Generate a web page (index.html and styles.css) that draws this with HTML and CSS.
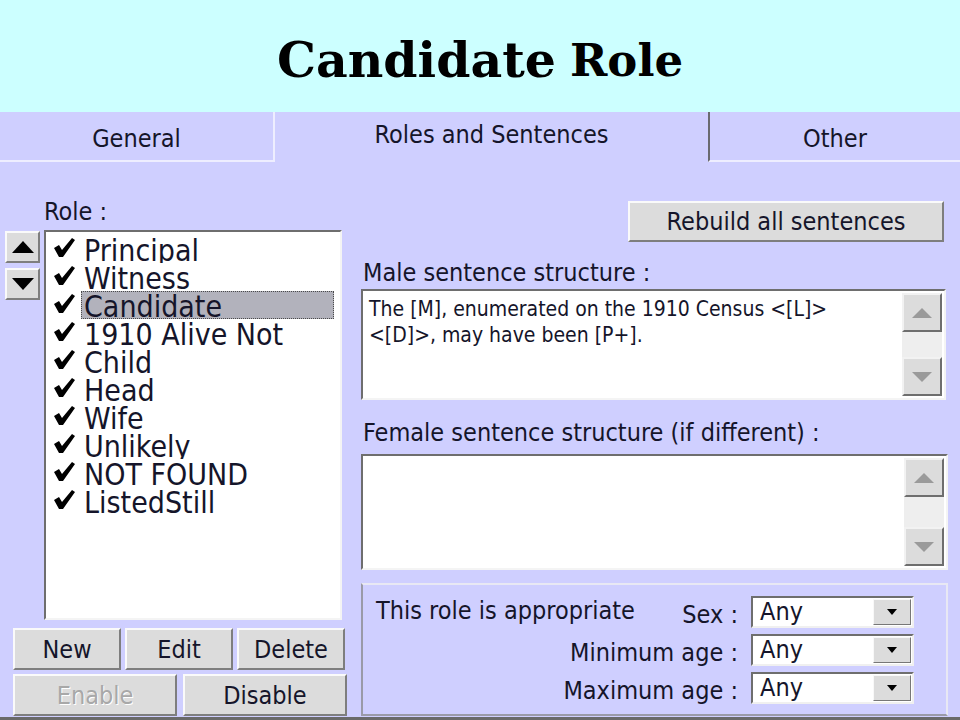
FILE: index.html
```html
<!DOCTYPE html>
<html lang="en">
<head>
  <meta charset="UTF-8">
  <title>Candidate Role</title>
  <link rel="stylesheet" href="styles.css">
</head>
<body>
  <header class="slide-title"><span class="t-big">Candidate</span> <span class="t-small">Role</span></header>

  <div class="dialog">
    <!-- tab strip -->
    <div class="tabs">
      <div class="tab tab-general">General</div>
      <div class="tab tab-active">Roles and Sentences</div>
      <div class="tab tab-other">Other</div>
    </div>

    <div class="page">
      <!-- left: role list -->
      <div class="col-left">
        <div class="label role-label">Role :</div>
        <div class="role-row">
          <div class="movers">
            <div class="btn mover"><svg width="22" height="12" viewBox="0 0 22 12"><polygon points="11,0 22,12 0,12" fill="#000"/></svg></div>
            <div class="btn mover"><svg width="22" height="12" viewBox="0 0 22 12"><polygon points="0,0 22,0 11,12" fill="#000"/></svg></div>
          </div>
          <div class="listbox">
            <div class="item"><svg class="chk" width="22" height="20" viewBox="0 0 22 20"><polygon points="0,10 5,7 8,12 18,0 21,2 9,19 5,19"/></svg><span class="txt">Principal</span></div>
            <div class="item"><svg class="chk" width="22" height="20" viewBox="0 0 22 20"><polygon points="0,10 5,7 8,12 18,0 21,2 9,19 5,19"/></svg><span class="txt">Witness</span></div>
            <div class="item"><svg class="chk" width="22" height="20" viewBox="0 0 22 20"><polygon points="0,10 5,7 8,12 18,0 21,2 9,19 5,19"/></svg><span class="txt sel">Candidate</span></div>
            <div class="item"><svg class="chk" width="22" height="20" viewBox="0 0 22 20"><polygon points="0,10 5,7 8,12 18,0 21,2 9,19 5,19"/></svg><span class="txt">1910 Alive Not</span></div>
            <div class="item"><svg class="chk" width="22" height="20" viewBox="0 0 22 20"><polygon points="0,10 5,7 8,12 18,0 21,2 9,19 5,19"/></svg><span class="txt">Child</span></div>
            <div class="item"><svg class="chk" width="22" height="20" viewBox="0 0 22 20"><polygon points="0,10 5,7 8,12 18,0 21,2 9,19 5,19"/></svg><span class="txt">Head</span></div>
            <div class="item"><svg class="chk" width="22" height="20" viewBox="0 0 22 20"><polygon points="0,10 5,7 8,12 18,0 21,2 9,19 5,19"/></svg><span class="txt">Wife</span></div>
            <div class="item"><svg class="chk" width="22" height="20" viewBox="0 0 22 20"><polygon points="0,10 5,7 8,12 18,0 21,2 9,19 5,19"/></svg><span class="txt">Unlikely</span></div>
            <div class="item"><svg class="chk" width="22" height="20" viewBox="0 0 22 20"><polygon points="0,10 5,7 8,12 18,0 21,2 9,19 5,19"/></svg><span class="txt">NOT FOUND</span></div>
            <div class="item"><svg class="chk" width="22" height="20" viewBox="0 0 22 20"><polygon points="0,10 5,7 8,12 18,0 21,2 9,19 5,19"/></svg><span class="txt">ListedStill</span></div>
          </div>
        </div>
        <div class="btn-row row1">
          <div class="btn">New</div>
          <div class="btn">Edit</div>
          <div class="btn">Delete</div>
        </div>
        <div class="btn-row row2">
          <div class="btn disabled">Enable</div>
          <div class="btn">Disable</div>
        </div>
      </div>

      <!-- right: sentences -->
      <div class="col-right">
        <div class="btn rebuild">Rebuild all sentences</div>

        <div class="label male-label">Male sentence structure :</div>
        <div class="memo memo-male">
          <div class="memo-text">The [M], enumerated on the 1910 Census &lt;[L]&gt;<br>&lt;[D]&gt;, may have been [P+].</div>
          <div class="vscroll">
            <div class="sbtn"><svg width="20" height="10" viewBox="0 0 20 10"><polygon points="10,0 20,10 0,10"/></svg></div>
            <div class="track"></div>
            <div class="sbtn"><svg width="20" height="10" viewBox="0 0 20 10"><polygon points="0,0 20,0 10,10"/></svg></div>
          </div>
        </div>

        <div class="label female-label">Female sentence structure (if different) :</div>
        <div class="memo memo-female">
          <div class="memo-text"></div>
          <div class="vscroll">
            <div class="sbtn"><svg width="20" height="10" viewBox="0 0 20 10"><polygon points="10,0 20,10 0,10"/></svg></div>
            <div class="track"></div>
            <div class="sbtn"><svg width="20" height="10" viewBox="0 0 20 10"><polygon points="0,0 20,0 10,10"/></svg></div>
          </div>
        </div>

        <div class="groupbox">
          <div class="flabel first"><span class="group-note">This role is appropriate</span><span>Sex :</span></div>
          <div class="combo"><span class="cval">Any</span><span class="cbtn"><svg width="10" height="6" viewBox="0 0 10 6"><polygon points="0,0 10,0 5,6"/></svg></span></div>
          <div class="flabel">Minimum age :</div>
          <div class="combo"><span class="cval">Any</span><span class="cbtn"><svg width="10" height="6" viewBox="0 0 10 6"><polygon points="0,0 10,0 5,6"/></svg></span></div>
          <div class="flabel">Maximum age :</div>
          <div class="combo"><span class="cval">Any</span><span class="cbtn"><svg width="10" height="6" viewBox="0 0 10 6"><polygon points="0,0 10,0 5,6"/></svg></span></div>
        </div>
      </div>
    </div>
  </div>
</body>
</html>
```

FILE: styles.css
```css
*{box-sizing:border-box}
body{margin:0;width:960px;height:720px;overflow:hidden;background:#cfcfff;
  font-family:"DejaVu Sans Condensed","DejaVu Sans",sans-serif;color:#15152a}

/* slide title */
.slide-title{height:112px;background:#ccffff;display:flex;align-items:center;justify-content:center;
  padding-top:8px;font-family:"DejaVu Serif",serif;font-weight:bold;color:#000;white-space:nowrap}
.slide-title .t-big{font-size:49px}
.slide-title .t-small{font-size:45px;margin-left:14px}

/* dialog */
.dialog{height:608px;background:#cfcfff;display:flex;flex-direction:column}
.tabs{display:flex;height:50px}
.tab{font-size:25px;display:flex;align-items:center;justify-content:center}
.tab-general{width:275px;border-right:2px solid #eeeeff;border-bottom:2px solid #eeeeff;padding-top:4px}
.tab-active{width:433px;padding-bottom:5px}
.tab-other{width:252px;border-left:2px solid #6a6a70;border-bottom:2px solid #eeeeff;padding-top:4px}

.page{flex:1;display:flex;gap:11px;border-bottom:3px solid #6a6a6a;overflow:hidden}
.label{font-size:25px;height:30px;line-height:30px;white-space:nowrap}

/* generic raised button */
.btn{background:#dcdcdc;border:2px solid;border-color:#fafafa #7e7e7e #7e7e7e #fafafa;
  display:flex;align-items:center;justify-content:center;font-size:25px;white-space:nowrap}
.btn.disabled{color:#a8a8a8;text-shadow:1px 1px 0 #fff}

/* left column */
.col-left{width:350px;flex:none;padding-left:5px}
.role-label{margin-top:35px;margin-left:39px}
.role-row{display:flex;gap:4px;margin-top:3px}
.movers{width:35px;display:flex;flex-direction:column;gap:5px;padding-top:1px}
.mover{height:32px}
.listbox{width:298px;height:390px;background:#fff;border:2px solid;border-color:#6e6e6e #f4f4f4 #f4f4f4 #6e6e6e;
  padding:3px 2px 0 0}
.item{height:28px;display:flex;overflow:hidden;font-size:30px;line-height:28px}
.chk{flex:none;margin:3px 5px 0 8px;fill:#000}
.txt{flex:1;padding:2px 0 0 3px;margin-right:4px;white-space:nowrap}
.txt.sel{background:#b2b2bc;outline:1px dotted #4a4a4a;outline-offset:-1px}

.btn-row{display:flex;margin-left:8px}
.btn-row .btn{height:42px}
.row1{margin-top:8px;gap:4px}
.row1 .btn{width:108px}
.row2{margin-top:4px;gap:6px}
.row2 .btn{width:164px}

/* right column */
.col-right{width:587px;flex:none;display:flex;flex-direction:column;align-items:flex-start}
.rebuild{align-self:flex-end;margin:39px 4px 0 0;width:316px;height:41px}
.male-label{margin-top:16px;padding-left:2px}
.female-label{margin-top:18px;padding-left:2px}

.memo{display:flex;background:#fff;border:2px solid;border-color:#6e6e6e #f4f4f4 #f4f4f4 #6e6e6e}
.memo-male{width:585px;height:111px;margin-top:1px}
.memo-female{width:587px;height:116px;margin-top:6px}
.memo-text{flex:1;font-size:21px;line-height:26px;padding:5px 6px;white-space:nowrap}
.vscroll{width:40px;flex:none;display:flex;flex-direction:column;margin:2px 2px 2px 0}
.sbtn{height:39px;background:#dcdcdc;border:2px solid;border-color:#f2f2f2 #6e6e6e #6e6e6e #f2f2f2;
  display:flex;align-items:center;justify-content:center;fill:#9a9a9a}
.track{flex:1;background:#eeeeee}

/* group box */
.groupbox{margin-top:13px;width:587px;height:133px;border:2px solid;border-color:#e8e8f4 #e8e8f4 #9a9aa8 #9a9aa8;
  display:grid;grid-template-columns:1fr 163px;grid-auto-rows:32px;column-gap:13px;row-gap:6px;
  padding:11px 32px 0 13px;white-space:nowrap}
.flabel{font-size:25px;text-align:right;line-height:30px;padding-top:4px}
.flabel.first{display:flex;justify-content:space-between;padding-top:0}
.flabel.first span:last-child{padding-top:4px}
.combo{height:32px;background:#fff;border:2px solid;border-color:#6e6e6e #f0f0f0 #f0f0f0 #6e6e6e;
  display:flex;align-items:stretch;font-size:25px}
.cval{flex:1;padding-left:7px;line-height:28px}
.cbtn{width:38px;margin:1px 1px 1px 0;background:#dcdcdc;border:1px solid;border-color:#f8f8f8 #777 #777 #f8f8f8;
  display:flex;align-items:center;justify-content:center;fill:#000}
```
